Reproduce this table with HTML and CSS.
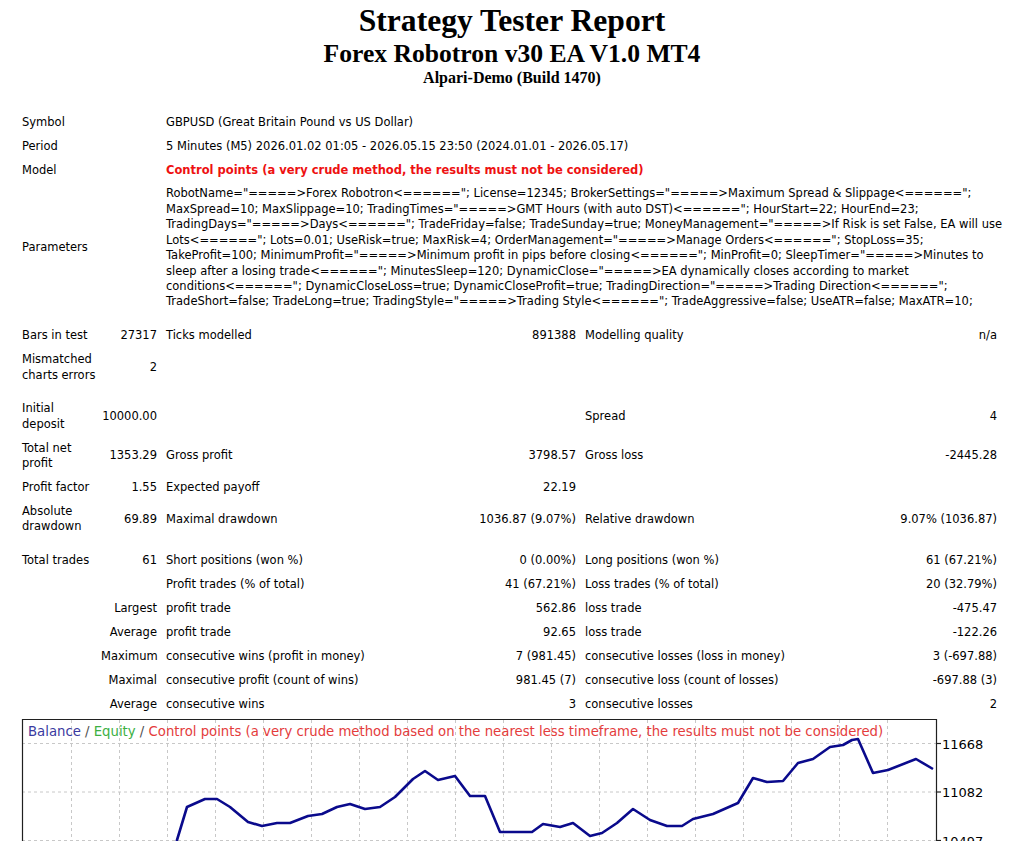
FILE: index.html
```html
<!DOCTYPE html>
<html>
<head>
<meta charset="utf-8">
<title>Strategy Tester: Forex Robotron v30 EA V1.0 MT4</title>
<link rel="stylesheet" href="styles.css">
</head>
<body>
<div class="page">
  <header class="head">
    <div class="h1">Strategy Tester Report</div>
    <div class="h2">Forex Robotron v30 EA V1.0 MT4</div>
    <div class="h3">Alpari-Demo (Build 1470)</div>
  </header>

  <table class="report">
    <colgroup>
      <col class="c1"><col class="c2"><col class="c3"><col class="c4"><col class="c5"><col class="c6">
    </colgroup>
    <tr><td colspan="2">Symbol</td><td colspan="4">GBPUSD (Great Britain Pound vs US Dollar)</td></tr>
    <tr><td colspan="2">Period</td><td colspan="4">5 Minutes (M5) 2026.01.02 01:05 - 2026.05.15 23:50 (2024.01.01 - 2026.05.17)</td></tr>
    <tr><td colspan="2">Model</td><td colspan="4" class="warn">Control points (a very crude method, the results must not be considered)</td></tr>
    <tr><td colspan="2">Parameters</td><td colspan="4" class="params"><span class="ln">RobotName="=====&gt;Forex Robotron&lt;======"; License=12345; BrokerSettings="=====&gt;Maximum Spread &amp; Slippage&lt;======";</span><span class="ln">MaxSpread=10; MaxSlippage=10; TradingTimes="=====&gt;GMT Hours (with auto DST)&lt;======"; HourStart=22; HourEnd=23;</span><span class="ln">TradingDays="=====&gt;Days&lt;======"; TradeFriday=false; TradeSunday=true; MoneyManagement="=====&gt;If Risk is set False, EA will use</span><span class="ln">Lots&lt;======"; Lots=0.01; UseRisk=true; MaxRisk=4; OrderManagement="=====&gt;Manage Orders&lt;======"; StopLoss=35;</span><span class="ln">TakeProfit=100; MinimumProfit="=====&gt;Minimum profit in pips before closing&lt;======"; MinProfit=0; SleepTimer="=====&gt;Minutes to</span><span class="ln">sleep after a losing trade&lt;======"; MinutesSleep=120; DynamicClose="=====&gt;EA dynamically closes according to market</span><span class="ln">conditions&lt;======"; DynamicCloseLoss=true; DynamicCloseProfit=true; TradingDirection="=====&gt;Trading Direction&lt;======";</span><span class="ln">TradeShort=false; TradeLong=true; TradingStyle="=====&gt;Trading Style&lt;======"; TradeAggressive=false; UseATR=false; MaxATR=10;</span></td></tr>
    <tr class="gap"><td colspan="6"></td></tr>
    <tr><td>Bars in test</td><td class="num">27317</td><td>Ticks modelled</td><td class="num">891388</td><td>Modelling quality</td><td class="num">n/a</td></tr>
    <tr><td class="lbl">Mismatched<br>charts errors</td><td class="num">2</td><td></td><td></td><td></td><td></td></tr>
    <tr class="gap"><td colspan="6"></td></tr>
    <tr><td class="lbl">Initial<br>deposit</td><td class="num">10000.00</td><td></td><td></td><td>Spread</td><td class="num">4</td></tr>
    <tr><td class="lbl">Total net<br>profit</td><td class="num">1353.29</td><td>Gross profit</td><td class="num">3798.57</td><td>Gross loss</td><td class="num">-2445.28</td></tr>
    <tr><td class="lbl">Profit factor</td><td class="num">1.55</td><td>Expected payoff</td><td class="num">22.19</td><td></td><td></td></tr>
    <tr><td class="lbl">Absolute<br>drawdown</td><td class="num">69.89</td><td>Maximal drawdown</td><td class="num">1036.87 (9.07%)</td><td>Relative drawdown</td><td class="num">9.07% (1036.87)</td></tr>
    <tr class="gap"><td colspan="6"></td></tr>
    <tr><td class="lbl">Total trades</td><td class="num">61</td><td>Short positions (won %)</td><td class="num">0 (0.00%)</td><td>Long positions (won %)</td><td class="num">61 (67.21%)</td></tr>
    <tr><td rowspan="6"></td><td></td><td>Profit trades (% of total)</td><td class="num">41 (67.21%)</td><td>Loss trades (% of total)</td><td class="num">20 (32.79%)</td></tr>
    <tr><td class="num">Largest</td><td>profit trade</td><td class="num">562.86</td><td>loss trade</td><td class="num">-475.47</td></tr>
    <tr><td class="num">Average</td><td>profit trade</td><td class="num">92.65</td><td>loss trade</td><td class="num">-122.26</td></tr>
    <tr><td class="num">Maximum</td><td>consecutive wins (profit in money)</td><td class="num">7 (981.45)</td><td>consecutive losses (loss in money)</td><td class="num">3 (-697.88)</td></tr>
    <tr><td class="num">Maximal</td><td>consecutive profit (count of wins)</td><td class="num">981.45 (7)</td><td>consecutive loss (count of losses)</td><td class="num">-697.88 (3)</td></tr>
    <tr><td class="num">Average</td><td>consecutive wins</td><td class="num">3</td><td>consecutive losses</td><td class="num">2</td></tr>
  </table>

  <div class="chart">
    <svg width="985" height="240" viewBox="17 716 985 240" xmlns="http://www.w3.org/2000/svg">
      <g class="grid">
        <line x1="22" y1="743.5" x2="936" y2="743.5"/>
        <line x1="22" y1="792" x2="936" y2="792"/>
        <line x1="22" y1="840.5" x2="936" y2="840.5"/>
        <line x1="22" y1="889" x2="936" y2="889"/>
        <line x1="71.5" y1="720" x2="71.5" y2="956"/>
        <line x1="119.5" y1="720" x2="119.5" y2="956"/>
        <line x1="167.5" y1="720" x2="167.5" y2="956"/>
        <line x1="215.5" y1="720" x2="215.5" y2="956"/>
        <line x1="263.5" y1="720" x2="263.5" y2="956"/>
        <line x1="311.5" y1="720" x2="311.5" y2="956"/>
        <line x1="359.5" y1="720" x2="359.5" y2="956"/>
        <line x1="407.5" y1="720" x2="407.5" y2="956"/>
        <line x1="455.5" y1="720" x2="455.5" y2="956"/>
        <line x1="503.5" y1="720" x2="503.5" y2="956"/>
        <line x1="551.5" y1="720" x2="551.5" y2="956"/>
        <line x1="599.5" y1="720" x2="599.5" y2="956"/>
        <line x1="647.5" y1="720" x2="647.5" y2="956"/>
        <line x1="695.5" y1="720" x2="695.5" y2="956"/>
        <line x1="743.5" y1="720" x2="743.5" y2="956"/>
        <line x1="791.5" y1="720" x2="791.5" y2="956"/>
        <line x1="839.5" y1="720" x2="839.5" y2="956"/>
        <line x1="887.5" y1="720" x2="887.5" y2="956"/>
      </g>
      <g class="frame">
        <polyline points="22.5,956 22.5,719.5 936.5,719.5 936.5,956"/>
        <line x1="936" y1="743.5" x2="941" y2="743.5"/>
        <line x1="936" y1="792" x2="941" y2="792"/>
        <line x1="936" y1="840.5" x2="941" y2="840.5"/>
      </g>
      <g class="axis">
        <text x="942" y="748.5">11668</text>
        <text x="942" y="797">11082</text>
        <text x="942" y="845.5">10497</text>
      </g>
      <text class="legend" x="28" y="736"><tspan class="lb">Balance</tspan><tspan class="ls"> / </tspan><tspan class="le">Equity</tspan><tspan class="ls"> / </tspan><tspan class="lc">Control points (a very crude method based on the nearest less timeframe, the results must not be considered)</tspan></text>
      <polyline class="balance" points="171,870 177,840 187,807 205,799 217,799 230,807 248,822 262,826 277,823 290,823 308,816 322,814 337,807 350,804 365,809 380,807 395,797 413,779 425,771 438,780 455,776 470,796 485,796 500,832 532,832 543,824 560,827 573,823 590,836 602,833 617,823 633,809 650,820 667,826 682,826 693,819 713,814 738,803 753,778 767,782 783,781 798,763 813,759 830,747 843,745 852,740 858,739 873,773 888,770 916,759 933,769"/>
    </svg>
  </div>
</div>
</body>
</html>
```
FILE: styles.css
```css
html, body {
  margin: 0;
  padding: 0;
  background: #ffffff;
  color: #000000;
}

.page {
  width: 1024px;
  padding-top: 3px;
}

.head {
  text-align: center;
  font-family: "Liberation Serif", "Times New Roman", serif;
  font-weight: bold;
}

.h1 {
  font-size: 31.6px;
  line-height: 36px;
}

.h2 {
  font-size: 25.6px;
  line-height: 29px;
}

.h3 {
  font-size: 16px;
  line-height: 19px;
}

.report {
  margin: 23px 0 0 17px;
  width: 985px;
  table-layout: fixed;
  border-collapse: separate;
  border-spacing: 1px;
  font-family: "DejaVu Sans", Tahoma, sans-serif;
  font-size: 11.5px;
  line-height: 15.4px;
}

.c1 { width: 78px; }
.c2 { width: 64px; }
.c3 { width: 230px; }
.c4 { width: 187px; }
.c5 { width: 230px; }
.c6 { width: 189px; }

.report td {
  padding: 3.75px 4px;
  text-align: left;
  vertical-align: middle;
}

.report td.lbl,
.report td.num {
  white-space: nowrap;
}

.report td.num {
  text-align: right;
}

.report td.warn {
  color: #ee1111;
  font-weight: bold;
}

.params .ln {
  display: block;
  white-space: nowrap;
}

.report tr.gap td {
  height: 9px;
  padding: 0;
}

.chart {
  margin: -1px 0 0 17px;
  height: 240px;
}

.chart svg {
  display: block;
}

.grid line {
  stroke: #c8c8c8;
  stroke-width: 1;
  stroke-dasharray: 3 3;
}

.frame polyline,
.frame line {
  fill: none;
  stroke: #202020;
  stroke-width: 1.2;
}

.axis text {
  font-family: "DejaVu Sans", Tahoma, sans-serif;
  font-size: 13px;
  fill: #000;
}

.legend {
  font-family: "DejaVu Sans", Tahoma, sans-serif;
  font-size: 13.25px;
}

.lb { fill: #3a3aa0; }
.ls { fill: #505050; }
.le { fill: #3cb043; }
.lc { fill: #e43c3c; }

.balance {
  fill: none;
  stroke: #0a0a8c;
  stroke-width: 2.6;
  stroke-linejoin: round;
}
```
